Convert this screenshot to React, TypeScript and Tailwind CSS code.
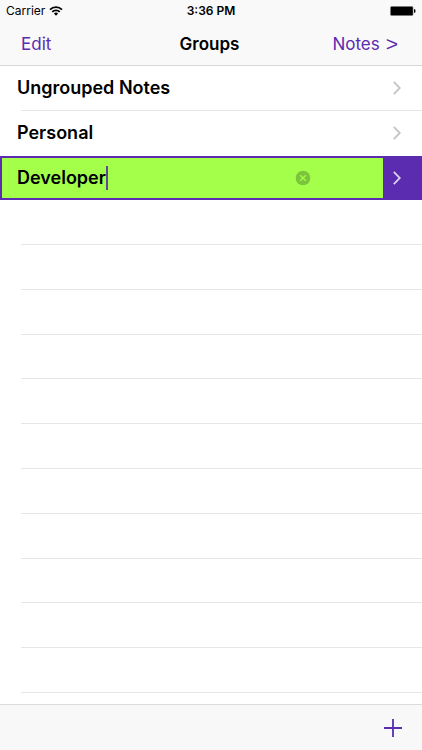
import React, { useState } from 'react';

const initialGroups = ['Ungrouped Notes', 'Personal'];
const EMPTY_ROWS = 11;

const Chevron: React.FC<{ className?: string }> = ({ className }) => (
  <svg viewBox="0 0 8 14" className={`w-2 h-3.5 shrink-0 ${className ?? ''}`} fill="none" stroke="currentColor" strokeWidth="1.8">
    <path d="M0.8 0.8l6 6.2-6 6.2" />
  </svg>
);

const StatusBar: React.FC = () => (
  <div className="h-[22px] px-[6px] grid grid-cols-3 items-center text-[12px] leading-4 text-black">
    <div className="flex items-center gap-1">
      <span>Carrier</span>
      <svg viewBox="0 0 14 10" className="w-3.5 h-2.5" fill="none" stroke="currentColor" strokeWidth="1.7">
        <path d="M1 3.6a8.5 8.5 0 0 1 12 0" />
        <path d="M3.2 5.9a5.4 5.4 0 0 1 7.6 0" />
        <path d="M7 9.8L4.9 7.6a3 3 0 0 1 4.2 0z" fill="currentColor" stroke="none" />
      </svg>
    </div>
    <span className="text-center font-semibold">3:36 PM</span>
    <svg viewBox="0 0 26 10" className="w-[26px] h-2.5 justify-self-end">
      <rect x="0.5" y="0.5" width="22.5" height="9" rx="1.2" fill="#000" stroke="#777" strokeWidth="0.6" />
      <path d="M24 3.3h0.6a0.8 0.8 0 0 1 0.8 0.8v1.8a0.8 0.8 0 0 1-0.8 0.8H24z" fill="#000" />
    </svg>
  </div>
);

export default function App() {
  const [draft, setDraft] = useState('Developer');

  return (
    <div className="min-h-screen flex flex-col bg-white font-['Inter',sans-serif] text-[18px] leading-6 text-black">
      <header className="bg-[#f9f9f9] border-b border-[#d8d8d8]">
        <StatusBar />
        <nav className="h-[43px] pl-[21px] pr-6 grid grid-cols-[1fr_auto_1fr] items-center text-[17px]">
          <button type="button" className="justify-self-start text-[#5b2bb0]">Edit</button>
          <h1 className="font-semibold">Groups</h1>
          <button type="button" className="justify-self-end flex items-center gap-1.5 text-[#5b2bb0]">
            Notes
            <span className="font-['Liberation_Sans',sans-serif] text-[21px]">&gt;</span>
          </button>
        </nav>
      </header>

      <ul className="flex-1 grid auto-rows-fr pb-[11px]">
        {initialGroups.map((name, i) => (
          <li key={name} className="flex flex-col">
            <a href="#" className="flex-1 flex items-center justify-between pl-[17px] pr-[21px] font-semibold">
              {name}
              <Chevron className="text-[#c4c4c8]" />
            </a>
            {i < initialGroups.length - 1 && <div className="h-px ml-[21px] bg-[#e6e6e8]" />}
          </li>
        ))}

        {/* Group being renamed */}
        <li className="min-h-10 flex items-stretch bg-[#5b2bb0] border-2 border-[#5b2bb0]">
          <div className="flex-1 flex items-center bg-[#a4ff4b] pl-[15px] pr-[72px]">
            <input
              type="text"
              aria-label="Group name"
              value={draft}
              onChange={(e) => setDraft(e.target.value)}
              className="field-sizing-content bg-transparent font-semibold outline-none"
            />
            <span className="w-0.5 h-6 bg-[#5a4a94]" />
            <button type="button" aria-label="Clear" onClick={() => setDraft('')} className="ml-auto">
              <svg viewBox="0 0 16 16" className="w-4 h-4 block">
                <circle cx="8" cy="8" r="7.3" fill="#7cc43c" />
                <path d="M5.2 5.2l5.6 5.6M10.8 5.2l-5.6 5.6" stroke="#a4ff4b" strokeWidth="1.3" />
              </svg>
            </button>
          </div>
          <div className="w-[37px] flex items-center pl-2.5">
            <Chevron className="text-[#d9d0ec]" />
          </div>
        </li>

        {Array.from({ length: EMPTY_ROWS }, (_, i) => (
          <li key={i} className="ml-[21px] border-b border-[#e6e6e8]" />
        ))}
      </ul>

      <footer className="h-[46px] pr-5 flex items-center justify-end bg-[#f8f8f8] border-t border-[#dcdcdc]">
        <button type="button" aria-label="Add group" className="text-[#5b2bb0]">
          <svg viewBox="0 0 18 18" className="w-[18px] h-[18px] block" stroke="currentColor" strokeWidth="1.8">
            <path d="M9 0v18M0 9h18" />
          </svg>
        </button>
      </footer>
    </div>
  );
}
